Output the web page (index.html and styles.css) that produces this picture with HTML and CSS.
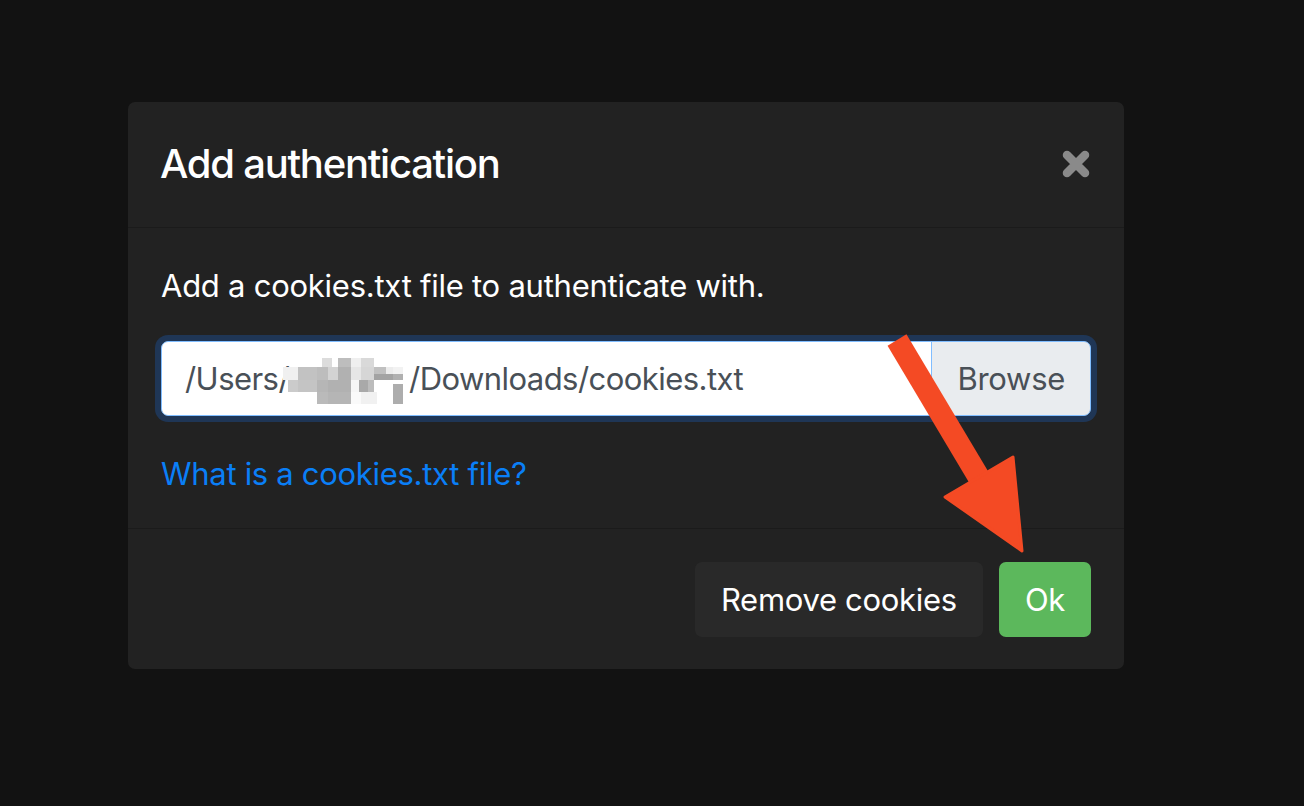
FILE: index.html
```html
<!DOCTYPE html>
<html>
<head>
<meta charset="utf-8">
<link rel="stylesheet" href="styles.css">
</head>
<body>
<div class="page">
  <div class="modal">
    <div class="modal-header">
      <h5 class="modal-title">Add authentication</h5>
      <button class="close" aria-label="Close">
        <svg width="28" height="28" viewBox="0 0 28 28"><path d="M5 5 L23 23 M23 5 L5 23" stroke="#8a8a8a" stroke-width="8.5" stroke-linecap="round"/></svg>
      </button>
    </div>
    <div class="modal-body">
      <p class="lead-text">Add a cookies.txt file to authenticate with.</p>
      <div class="input-group">
        <div class="form-control"><span>/Users/</span><svg class="mosaic" width="127" height="47" viewBox="0 0 127 47">
            <rect x="39" y="0" width="10" height="9" fill="#dcdcdc"/>
            <rect x="55" y="0" width="13" height="9" fill="#bdbdbd"/>
            <rect x="68" y="0" width="10" height="9" fill="#efefef"/>
            <rect x="78" y="0" width="13" height="9" fill="#d9d9d9"/>
            <rect x="0" y="9" width="15" height="13" fill="#f0f0f0"/>
            <rect x="15" y="9" width="19" height="13" fill="#c2c2c2"/>
            <rect x="34" y="9" width="11" height="13" fill="#bdbdbd"/>
            <rect x="45" y="9" width="10" height="13" fill="#d3d3d3"/>
            <rect x="55" y="9" width="13" height="13" fill="#b1b1b1"/>
            <rect x="68" y="9" width="10" height="13" fill="#e6e6e6"/>
            <rect x="78" y="9" width="13" height="13" fill="#d6d6d6"/>
            <rect x="91" y="9" width="12" height="7" fill="#c0c0c0"/>
            <rect x="103" y="9" width="7" height="7" fill="#ececec"/>
            <rect x="110" y="9" width="10" height="7" fill="#f2f2f2"/>
            <rect x="91" y="16" width="19" height="6" fill="#a3a3a3"/>
            <rect x="110" y="16" width="10" height="6" fill="#b0b0b0"/>
            <rect x="5" y="22" width="10" height="12" fill="#cbcbcb"/>
            <rect x="15" y="22" width="19" height="12" fill="#c4c4c4"/>
            <rect x="34" y="22" width="11" height="12" fill="#b6b6b6"/>
            <rect x="45" y="22" width="23" height="12" fill="#b1b1b1"/>
            <rect x="68" y="22" width="8" height="12" fill="#f6f6f6"/>
            <rect x="76" y="22" width="9" height="12" fill="#a9a9a9"/>
            <rect x="85" y="22" width="6" height="12" fill="#bcbcbc"/>
            <rect x="34" y="34" width="11" height="12" fill="#bababa"/>
            <rect x="45" y="34" width="23" height="12" fill="#b5b5b5"/>
            <rect x="68" y="34" width="10" height="12" fill="#fafafa"/>
            <rect x="78" y="34" width="16" height="12" fill="#f1f1f1"/>
            <rect x="110" y="26" width="10" height="20" fill="#adadad"/>
          </svg><span>/Downloads/cookies.txt</span></div>
        <div class="input-append">Browse</div>
      </div>
      <a class="help-link" href="#">What is a cookies.txt file?</a>
    </div>
    <div class="modal-footer">
      <button class="btn btn-dark">Remove cookies</button>
      <button class="btn btn-success">Ok</button>
    </div>
  </div>
</div>
<svg class="arrow" width="1304" height="806" viewBox="0 0 1304 806">
  <line x1="897" y1="340" x2="984" y2="486" stroke="#f44a24" stroke-width="22"/>
  <polygon points="945,497 1013,457 1022,551" fill="#f44a24" stroke="#f44a24" stroke-width="3" stroke-linejoin="round"/>
</svg>
</body>
</html>
```

FILE: styles.css
```css
html, body {
  margin: 0;
  padding: 0;
  background: #121212;
  width: 1304px;
  height: 806px;
  overflow: hidden;
  font-family: "Inter", "Noto Sans", sans-serif;
}
.page {
  padding-top: 102px;
  padding-left: 128px;
}
.modal {
  width: 996px;
  background: #222222;
  border-radius: 7px;
  color: #ffffff;
}
.modal-header {
  display: flex;
  align-items: center;
  justify-content: space-between;
  padding: 32px 33px 33px 32px;
  border-bottom: 1px solid #1b1b1b;
}
.modal-title {
  margin: 0;
  font-size: 40px;
  line-height: 60px;
  font-weight: 500;
  letter-spacing: -1.25px;
}
.close {
  background: none;
  border: 0;
  padding: 0;
  margin-right: 1px;
  display: flex;
}
.modal-body {
  padding: 34px 33px 31px 33px;
  border-bottom: 1px solid #1b1b1b;
}
.lead-text {
  margin: 0 0 32px 0;
  font-size: 31px;
  line-height: 47px;
  letter-spacing: -0.25px;
}
.input-group {
  display: flex;
  height: 75px;
  border-radius: 7px;
  box-shadow: 0 0 0 6px #1f3656;
}
.form-control {
  flex: 1;
  display: flex;
  align-items: center;
  background: #ffffff;
  border: 1px solid #80bdff;
  border-radius: 7px 0 0 7px;
  padding-left: 23px;
  color: #495057;
  font-size: 31px;
  letter-spacing: -0.55px;
}
.mosaic {
  display: block;
  margin: 6px -1px 0 -6px;
}
.input-append {
  display: flex;
  align-items: center;
  background: #e9ecef;
  border: 1px solid #80bdff;
  border-radius: 0 7px 7px 0;
  padding: 0 25px 0 26px;
  margin-left: -1px;
  color: #495057;
  font-size: 31px;
  letter-spacing: -0.3px;
}
.help-link {
  display: block;
  margin-top: 34px;
  color: #0a7ff7;
  text-decoration: none;
  font-size: 31px;
  line-height: 47px;
  letter-spacing: -0.3px;
}
.modal-footer {
  display: flex;
  justify-content: flex-end;
  gap: 16px;
  padding: 33px 33px 32px 33px;
}
.btn {
  border: 0;
  border-radius: 7px;
  height: 75px;
  padding: 0 26px;
  font-family: inherit;
  font-size: 31px;
  letter-spacing: -0.3px;
  color: #ffffff;
}
.btn-dark {
  background: #292929;
}
.btn-success {
  background: #5cb85c;
}
.arrow {
  position: absolute;
  left: 0;
  top: 0;
  pointer-events: none;
}
```
